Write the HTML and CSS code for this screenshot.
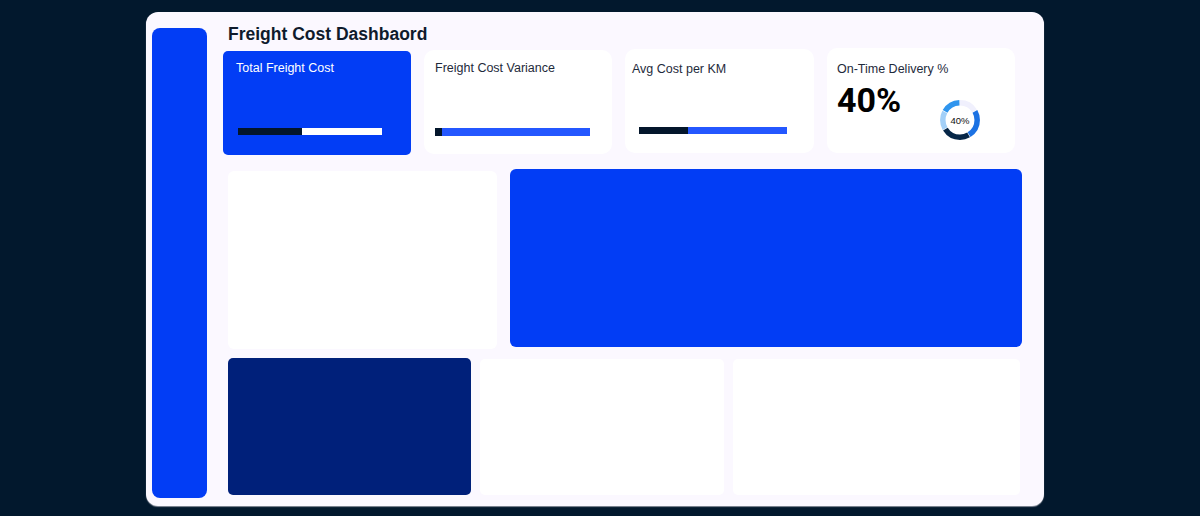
FILE: index.html
```html
<!DOCTYPE html>
<html lang="en">
<head>
<meta charset="utf-8">
<title>Freight Cost Dashbaord</title>
<link rel="stylesheet" href="styles.css">
</head>
<body>
<div class="frame">
  <aside class="sidebar"></aside>
  <main class="content">
    <h1 class="title">Freight Cost Dashbaord</h1>
    <section class="kpis">
      <div class="kpi kpi-total">
        <div class="kpi-label">Total Freight Cost</div>
        <div class="bar bar-total"><span class="bar-fill" style="width:64px"></span></div>
      </div>
      <div class="kpi kpi-variance">
        <div class="kpi-label">Freight Cost Variance</div>
        <div class="bar bar-variance"><span class="bar-fill" style="width:7px"></span></div>
      </div>
      <div class="kpi kpi-avg">
        <div class="kpi-label">Avg Cost per KM</div>
        <div class="bar bar-avg"><span class="bar-fill" style="width:49px"></span></div>
      </div>
      <div class="kpi kpi-ontime">
        <div class="kpi-label">On-Time Delivery %</div>
        <div class="ontime-row">
          <div class="kpi-value">40%</div>
          <svg class="donut" viewBox="0 0 40 40" width="40" height="40">
            <g transform="rotate(-90 20 20)" fill="none" stroke-width="5.5">
              <circle cx="20" cy="20" r="17.2" pathLength="360" stroke="#f0f0fd" stroke-dasharray="58 302" stroke-dashoffset="0"/>
              <circle cx="20" cy="20" r="17.2" pathLength="360" stroke="#1c72e3" stroke-dasharray="88 272" stroke-dashoffset="-60"/>
              <circle cx="20" cy="20" r="17.2" pathLength="360" stroke="#062647" stroke-dasharray="88 272" stroke-dashoffset="-150"/>
              <circle cx="20" cy="20" r="17.2" pathLength="360" stroke="#a3d0f8" stroke-dasharray="58 302" stroke-dashoffset="-240"/>
              <circle cx="20" cy="20" r="17.2" pathLength="360" stroke="#2f95ee" stroke-dasharray="58 302" stroke-dashoffset="-300"/>
            </g>
            <text x="20" y="23.6" text-anchor="middle" class="donut-text">40%</text>
          </svg>
        </div>
      </div>
    </section>
    <section class="row row-mid">
      <div class="panel panel-white panel-mid-left"></div>
      <div class="panel panel-blue"></div>
    </section>
    <section class="row row-bottom">
      <div class="panel panel-navy"></div>
      <div class="panel panel-white panel-bottom"></div>
      <div class="panel panel-white panel-bottom"></div>
    </section>
  </main>
</div>
</body>
</html>
```
FILE: styles.css
```css
* { box-sizing: border-box; }

html, body {
  margin: 0;
  padding: 0;
}

body {
  background: #02182d;
  width: 1200px;
  height: 516px;
  overflow: hidden;
  font-family: "Liberation Sans", Arial, sans-serif;
}

.frame {
  margin: 12px 0 0 146px;
  width: 898px;
  height: 494px;
  background: #fbf8ff;
  border-radius: 12px;
  box-shadow: 0 1px 1px rgba(190, 190, 200, 0.7);
  padding: 9px 22px 11px 6px;
  display: flex;
  align-items: flex-start;
}

.sidebar {
  width: 55px;
  height: 470px;
  margin-top: 7px;
  background: #023df5;
  border-radius: 8px;
  flex: none;
}

.content {
  margin-left: 16px;
  width: 799px;
  display: flex;
  flex-direction: column;
}

.title {
  margin: 2px 0 0 5px;
  font-size: 17.5px;
  line-height: 22px;
  font-weight: 700;
  color: #0f1b2c;
}

.kpis {
  margin-top: 3px;
  display: grid;
  grid-template-columns: 188px 188px 189px 188px;
  column-gap: 13px;
  align-items: start;
}

.kpi {
  height: 104px;
  background: #ffffff;
  border-radius: 10px;
  display: flex;
  flex-direction: column;
  align-items: flex-start;
}

.kpi-label {
  font-size: 12.5px;
  line-height: 16px;
  color: #1e2a3b;
  white-space: nowrap;
}

.kpi-total {
  margin-top: 3px;
  background: #023df5;
  border-radius: 5px;
  padding: 9px 13px 0;
}

.kpi-total .kpi-label { color: #ffffff; }

.kpi-variance {
  margin-top: 2px;
  padding: 10px 11px 0;
}

.kpi-avg {
  margin-top: 1px;
  padding: 12px 7px 0;
}

.kpi-ontime {
  height: 105px;
  padding: 13px 10px 0;
}

.bar {
  display: flex;
  flex: none;
}

.bar-fill {
  display: block;
  height: 100%;
  background: #03162b;
}

.bar-total {
  margin: 52px 0 0 2px;
  width: 144px;
  height: 7px;
  background: #ffffff;
}

.bar-variance {
  margin-top: 52px;
  width: 155px;
  height: 8px;
  background: #2457ff;
}

.bar-avg {
  margin: 50px 0 0 7px;
  width: 148px;
  height: 7px;
  background: #2457ff;
}

.ontime-row {
  margin-top: 4px;
  display: flex;
  align-items: flex-start;
}

.kpi-value {
  font-family: Roboto, "Liberation Sans", Arial, sans-serif;
  font-size: 34px;
  line-height: 38px;
  font-weight: 700;
  color: #000000;
  width: 68px;
}

.donut {
  margin: 19px 0 0 35px;
  display: block;
}

.donut-text {
  font-family: "Liberation Sans", Arial, sans-serif;
  font-size: 9.5px;
  fill: #111111;
}

.row {
  display: grid;
  margin-left: 5px;
  align-items: start;
}

.row-mid {
  margin-top: 14px;
  grid-template-columns: 269px 512px;
  column-gap: 13px;
}

.row-bottom {
  margin-top: 9px;
  grid-template-columns: 243px 244px 287px;
  column-gap: 9px;
}

.panel {
  border-radius: 6px;
}

.panel-white { background: #ffffff; }

.panel-mid-left {
  margin-top: 2px;
  height: 178px;
}

.panel-blue {
  height: 178px;
  background: #023df5;
}

.panel-navy {
  height: 137px;
  background: #00207a;
  border-radius: 5px;
}

.panel-bottom {
  margin-top: 1px;
  height: 136px;
  border-radius: 5px;
}
```
